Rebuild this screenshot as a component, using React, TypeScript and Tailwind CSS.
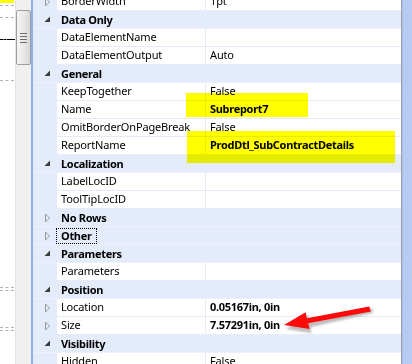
import React from "react";

type Row =
  | { kind: "header"; label: string; open: boolean; focus?: boolean }
  | { kind: "item"; label: string; value?: string; bold?: boolean; expandable?: boolean };

const rows: Row[] = [
  { kind: "item", label: "BorderWidth", value: "1pt", expandable: true },
  { kind: "header", label: "Data Only", open: true },
  { kind: "item", label: "DataElementName", value: "" },
  { kind: "item", label: "DataElementOutput", value: "Auto" },
  { kind: "header", label: "General", open: true },
  { kind: "item", label: "KeepTogether", value: "False" },
  { kind: "item", label: "Name", value: "Subreport7", bold: true },
  { kind: "item", label: "OmitBorderOnPageBreak", value: "False" },
  { kind: "item", label: "ReportName", value: "ProdDtl_SubContractDetails", bold: true },
  { kind: "header", label: "Localization", open: true },
  { kind: "item", label: "LabelLocID", value: "" },
  { kind: "item", label: "ToolTipLocID", value: "" },
  { kind: "header", label: "No Rows", open: false },
  { kind: "header", label: "Other", open: false, focus: true },
  { kind: "header", label: "Parameters", open: true },
  { kind: "item", label: "Parameters", value: "" },
  { kind: "header", label: "Position", open: true },
  { kind: "item", label: "Location", value: "0.05167in, 0in", bold: true, expandable: true },
  { kind: "item", label: "Size", value: "7.57291in, 0in", bold: true, expandable: true },
  { kind: "header", label: "Visibility", open: true },
  { kind: "item", label: "Hidden", value: "False" },
];

const Collapsed = () => (
  <svg width="7" height="10" viewBox="0 0 7 10" className="block">
    <path d="M1.5 1 L5.5 5 L1.5 9 Z" fill="none" stroke="#9a9a9a" strokeWidth="1" />
  </svg>
);

const Expanded = () => (
  <svg width="7" height="7" viewBox="0 0 7 7" className="block">
    <path d="M6 0.5 L6 6 L0.5 6 Z" fill="#3c3c3c" />
  </svg>
);

function GridRow({ r }: { r: Row }) {
  if (r.kind === "header") {
    return (
      <div className="flex shrink-0 h-[18px] bg-[#e4ebfa] border-b border-[#eef1fb]">
        <div className="w-[24px] flex items-center justify-end pr-[6px]">
          {r.open ? <Expanded /> : <Collapsed />}
        </div>
        <div className="flex items-center">
          <span
            className={
              "font-bold tracking-[-0.3px] leading-[14px] px-[4px] -ml-[1px] border " +
              (r.focus ? "border-dotted border-black" : "border-transparent")
            }
          >
            {r.label}
          </span>
        </div>
      </div>
    );
  }
  return (
    <div className="flex shrink-0 h-[18px]">
      <div className="w-[24px] bg-[#e4ebfa] flex items-center justify-end pr-[6px]">
        {r.expandable ? <Collapsed /> : null}
      </div>
      <div className="w-[148px] bg-white border-b border-[#e6ebf7] flex items-center pl-[4px] whitespace-nowrap overflow-hidden">
        {r.label}
      </div>
      <div className="w-[1px] bg-[#e6ebf7]" />
      <div
        className={
          "flex-1 bg-white border-b border-[#e6ebf7] flex items-center pl-[4px] whitespace-nowrap overflow-hidden " +
          (r.bold ? "font-bold tracking-[-0.3px]" : "")
        }
      >
        {r.value}
      </div>
    </div>
  );
}

export default function App() {
  return (
    <div
      className="relative w-[412px] h-[364px] overflow-hidden flex bg-white text-[11px] tracking-[-0.15px] text-black"
      style={{ fontFamily: '"Noto Sans", "Open Sans", sans-serif' }}
    >
      {/* report designer canvas */}
      <div className="relative w-[15px] h-full bg-white">
        <div className="absolute left-0 top-0 w-[14px] h-[3px] bg-[#ffff00]" />
        <div className="absolute left-0 top-[5px] w-[14px] border-t border-dashed border-[#b0b0b0]" />
        <div className="absolute left-0 top-[17px] w-[14px] border-t border-dashed border-[#b0b0b0]" />
        <div className="absolute left-0 top-[39px] w-[10px] border-t border-dashed border-black" />
        <div className="absolute left-[10px] top-[39px] w-[5px] border-t border-black" />
        <div className="absolute left-0 top-[80px] w-[14px] border-t border-dashed border-[#b0b0b0]" />
        <div className="absolute left-0 top-[287px] w-[14px] border-t border-dashed border-[#b0b0b0]" />
        <div className="absolute left-0 top-[290px] w-[14px] border-t border-dashed border-[#b0b0b0]" />
        <div className="absolute left-0 top-[327px] w-[14px] border-t border-dashed border-[#b0b0b0]" />
        <div className="absolute left-0 top-[330px] w-[14px] border-t border-dashed border-[#b0b0b0]" />
      </div>
      {/* vertical scrollbar */}
      <div className="w-[16px] h-full bg-[#f0f0f0] border-l border-[#e2e2e2] flex flex-col pt-[10px]">
        <div className="w-[15px] h-[55px] rounded-[2px] border border-[#9e9e9e] bg-gradient-to-r from-[#f4f4f4] via-[#e9e9e9] to-[#d8d8d8] flex flex-col items-center justify-center gap-[2px]">
          <div className="w-[7px] h-[1px] bg-[#6e6e6e]" />
          <div className="w-[7px] h-[1px] bg-[#6e6e6e]" />
          <div className="w-[7px] h-[1px] bg-[#6e6e6e]" />
          <div className="w-[7px] h-[1px] bg-[#6e6e6e]" />
        </div>
      </div>
      {/* blue border */}
      <div className="w-[2px] h-full bg-[#8fb0e6]" />
      {/* property grid */}
      <div className="w-[368px] h-full flex flex-col -mt-[7px]">
        {rows.map((r, i) => (
          <GridRow key={i} r={r} />
        ))}
      </div>
      {/* right border */}
      <div className="w-[1px] h-full bg-[#9aa0aa]" />
      <div className="flex-1 h-full bg-[#b6cbf1] border-l border-[#a9bfe8]" />

      {/* highlighter marks */}
      <div className="absolute left-[186px] top-[93px] w-[122px] h-[24px] bg-[#ffff00] mix-blend-multiply" />
      <div className="absolute left-[187px] top-[131px] w-[208px] h-[32px] bg-[#ffff00] mix-blend-multiply" />

      {/* red arrow */}
      <svg className="absolute left-0 top-0" width="412" height="364" viewBox="0 0 412 364">
        <defs>
          <filter id="blur" x="-20%" y="-50%" width="140%" height="200%">
            <feGaussianBlur stdDeviation="1.2" />
          </filter>
        </defs>
        <polygon
          points="373,313 372,308 310,322 308,315 286,329 311,333 311,327"
          fill="#7a7a7a"
          opacity="0.5"
          filter="url(#blur)"
        />
        <polygon points="370.8,311.6 369.2,306.4 306.8,318.2 305.6,312.2 284,325 309.6,329 308.2,323.2" fill="#ff0a0a" />
      </svg>
    </div>
  );
}
